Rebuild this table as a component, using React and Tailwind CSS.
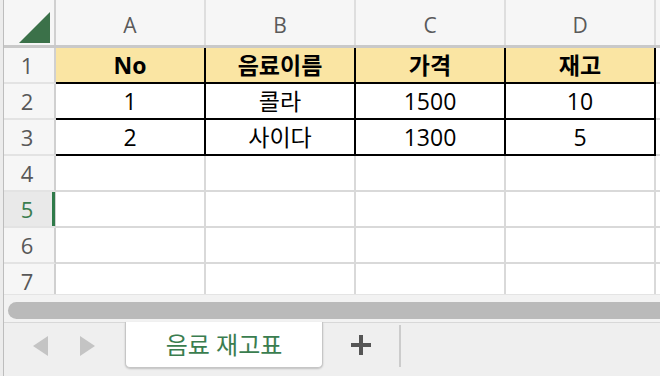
import { Fragment } from 'react'

const cols = ['A', 'B', 'C', 'D']

// 시트 데이터: 헤더 행 + 두 개의 음료
const rows = [
  { cells: ['No', '음료이름', '가격', '재고'], header: true },
  { cells: ['1', '콜라', '1500', '10'] },
  { cells: ['2', '사이다', '1300', '5'] },
]

const font = "font-['Open_Sans','Noto_Sans_CJK_KR',sans-serif]"

function RowHead({ n, active }) {
  return (
    <div
      className={`relative w-[52px] h-[36px] shrink-0 flex items-center justify-center border-r-2 border-b-2 border-r-[#d0d0d0] border-b-[#e3e3e3] text-[22px] ${
        active ? 'bg-[#e9e9e9] text-[#3a7d4f]' : 'bg-[#f6f6f6] text-[#585858]'
      }`}
    >
      <span className="pr-1">{n}</span>
      {active && <div className="absolute right-[-1px] top-0 bottom-0 w-[3px] bg-[#2f7a49]" />}
    </div>
  )
}

function DataRow({ n, row }) {
  return (
    <div className="flex h-[36px] shrink-0">
      <RowHead n={n} />
      {row.cells.map((c, i) => (
        <div
          key={i}
          className={`w-[150px] shrink-0 flex items-center justify-center border-r-2 border-b-2 border-black text-[23px] text-black ${
            row.header ? 'bg-[#fae5a3] font-bold' : 'bg-white'
          }`}
        >
          {c}
        </div>
      ))}
      <div className="flex-1 border-b-2 border-[#d9d9d9] bg-white" />
    </div>
  )
}

function EmptyRow({ n, active }) {
  return (
    <div className="flex h-[36px] shrink-0">
      <RowHead n={n} active={active} />
      {cols.map((c) => (
        <div key={c} className="w-[150px] shrink-0 border-r-2 border-b-2 border-[#d9d9d9] bg-white" />
      ))}
      <div className="flex-1 border-b-2 border-[#d9d9d9] bg-white" />
    </div>
  )
}

export default function App() {
  return (
    <div className={`w-[660px] h-[376px] overflow-hidden flex bg-white ${font}`}>
      <div className="w-[4px] shrink-0 bg-[#ececec] border-r border-[#bdbdbd]" />

      <div className="flex-1 flex flex-col min-w-0">
        {/* 열 머리글 */}
        <div className="flex h-[48px] shrink-0 border-b-[3px] border-[#c9c9c9] bg-[#f6f6f6]">
          <div className="w-[52px] shrink-0 border-r-2 border-[#d0d0d0] flex items-end justify-end pr-[4px] pb-[2px]">
            <svg width="31" height="31" viewBox="0 0 31 31">
              <polygon points="31,0 31,31 0,31" fill="#3b7149" />
            </svg>
          </div>
          {cols.map((c) => (
            <div
              key={c}
              className="w-[150px] shrink-0 border-r-2 border-[#dedede] flex items-center justify-center pt-[6px] text-[21px] text-[#5a5a5a]"
            >
              {c}
            </div>
          ))}
          <div className="flex-1" />
        </div>

        {/* 셀 영역 */}
        <div className="h-[246px] shrink-0 flex flex-col overflow-hidden">
          {rows.map((r, i) => (
            <Fragment key={i}>
              <DataRow n={i + 1} row={r} />
            </Fragment>
          ))}
          {[4, 5, 6, 7].map((n) => (
            <EmptyRow key={n} n={n} active={n === 5} />
          ))}
        </div>

        {/* 가로 스크롤바 */}
        <div className="h-[28px] shrink-0 bg-[#f2f2f2] border-t border-[#e4e4e4] pt-[7px] pl-[4px]">
          <div className="h-[17px] w-[700px] rounded-full bg-[#bababa]" />
        </div>

        {/* 시트 탭 */}
        <div className="flex-1 flex items-start bg-[#efefef] border-t border-[#d8d8d8]">
          <div className="w-[121px] h-[46px] flex items-center pl-[29px] gap-[32px]">
            <svg width="15" height="20" viewBox="0 0 15 20">
              <polygon points="15,0 15,20 0,10" fill="#c4c4c4" />
            </svg>
            <svg width="15" height="20" viewBox="0 0 15 20">
              <polygon points="0,0 0,20 15,10" fill="#c4c4c4" />
            </svg>
          </div>
          <div className="w-[198px] h-[46px] bg-white border-x border-b border-[#c6c6c6] rounded-b-[5px] shadow-[0_1px_2px_rgba(0,0,0,0.2)] flex items-center justify-center text-[24px] text-[#3a7d4f] -mt-px">
            음료 재고표
          </div>
          <div className="w-[76px] h-[46px] flex items-center justify-center pb-[2px]">
            <svg width="20" height="20" viewBox="0 0 20 20">
              <rect x="0" y="8" width="20" height="4" fill="#555" />
              <rect x="8" y="0" width="4" height="20" fill="#555" />
            </svg>
          </div>
          <div className="w-[2px] h-[42px] mt-[2px] bg-[#cccccc]" />
        </div>
      </div>
    </div>
  )
}
